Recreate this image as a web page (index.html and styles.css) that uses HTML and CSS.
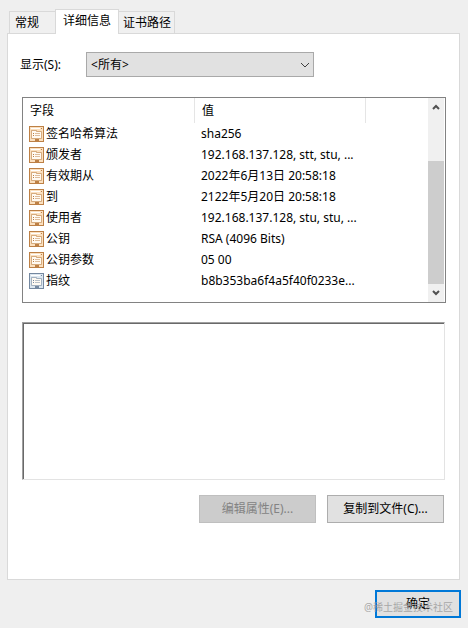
FILE: index.html
```html
<!DOCTYPE html>
<html lang="zh-CN">
<head>
  <meta charset="UTF-8" />
  <meta name="viewport" content="width=device-width, initial-scale=1.0" />
  <title>证书</title>
  <link rel="stylesheet" href="styles.css">
</head>
<body>
  <!-- 图标定义 -->
  <svg class="defs" aria-hidden="true">
    <symbol id="field" viewBox="0 0 15 16">
      <rect class="frame" x="0.5" y="0.5" width="14" height="15" />
      <path class="light" d="M2 2.5h9" />
      <path class="dark" d="M12 2.5h1" />
      <path class="paper" d="M2.5 4.5h5v1h5v7h-10z" />
      <path class="dark" d="M4 7.5h1M4 9.5h1" />
      <path class="line" d="M6 7.5h5M6 9.5h5" />
      <path class="seal" d="M6 14h4" />
    </symbol>
    <symbol id="chevron" viewBox="0 0 10 6">
      <path d="M1 1l4 4 4-4" fill="none" stroke="currentColor" />
    </symbol>
    <symbol id="arrow" viewBox="0 0 8 6">
      <path d="M1 1l3 3 3-3" fill="none" stroke="currentColor" stroke-width="2" />
    </symbol>
  </svg>

  <nav class="tabs" role="tablist">
    <button class="tab" role="tab" aria-selected="false">常规</button>
    <button class="tab active" role="tab" aria-selected="true">详细信息</button>
    <button class="tab" role="tab" aria-selected="false">证书路径</button>
  </nav>

  <main class="panel">
    <div class="filter">
      <label for="show">显示(S):</label>
      <div class="select">
        <select id="show">
          <option>&lt;所有&gt;</option>
        </select>
        <svg class="chevron"><use href="#chevron" /></svg>
      </div>
    </div>

    <!-- 字段列表 -->
    <div class="list">
      <table class="fields">
        <thead>
          <tr><th class="col-name">字段</th><th class="col-value">值</th><th></th></tr>
        </thead>
        <tbody>
          <tr><td><span class="name"><svg class="icon"><use href="#field" /></svg>签名哈希算法</span></td><td>sha256</td><td></td></tr>
          <tr><td><span class="name"><svg class="icon"><use href="#field" /></svg>颁发者</span></td><td>192.168.137.128, stt, stu, ...</td><td></td></tr>
          <tr><td><span class="name"><svg class="icon"><use href="#field" /></svg>有效期从</span></td><td>2022年6月13日 20:58:18</td><td></td></tr>
          <tr><td><span class="name"><svg class="icon"><use href="#field" /></svg>到</span></td><td>2122年5月20日 20:58:18</td><td></td></tr>
          <tr><td><span class="name"><svg class="icon"><use href="#field" /></svg>使用者</span></td><td>192.168.137.128, stu, stu, ...</td><td></td></tr>
          <tr><td><span class="name"><svg class="icon"><use href="#field" /></svg>公钥</span></td><td>RSA (4096 Bits)</td><td></td></tr>
          <tr><td><span class="name"><svg class="icon"><use href="#field" /></svg>公钥参数</span></td><td>05 00</td><td></td></tr>
          <tr><td><span class="name"><svg class="icon blue"><use href="#field" /></svg>指纹</span></td><td>b8b353ba6f4a5f40f0233e...</td><td></td></tr>
        </tbody>
      </table>
      <div class="scrollbar">
        <button class="scroll-btn" aria-label="向上滚动"><svg class="arrow up"><use href="#arrow" /></svg></button>
        <div class="track"><div class="thumb"></div></div>
        <button class="scroll-btn" aria-label="向下滚动"><svg class="arrow"><use href="#arrow" /></svg></button>
      </div>
    </div>

    <textarea class="detail" aria-label="字段内容" readonly></textarea>

    <div class="actions">
      <button class="btn" disabled>编辑属性(E)...</button>
      <button class="btn">复制到文件(C)...</button>
    </div>
  </main>

  <footer class="footer">
    <button class="btn ok">确定</button>
    <span class="watermark">@稀土掘金技术社区</span>
  </footer>
</body>
</html>
```
FILE: styles.css
```css
* {
  box-sizing: border-box;
}

body {
  display: flex;
  flex-direction: column;
  min-height: 100vh;
  margin: 0;
  padding: 9px 7px 10px;
  background-color: #efefef;
  color: #000;
}

body, button, select, textarea {
  font-family: "Noto Sans", "Noto Sans CJK SC", sans-serif;
  font-size: 12px;
  line-height: 18px;
}

.defs {
  position: absolute;
  width: 0;
  height: 0;
}

/* 选项卡 */
.tabs {
  display: flex;
  align-items: flex-end;
  padding-left: 2px;
}

.tab {
  height: 22px;
  padding: 0 4px;
  border: 1px solid #d9d9d9;
  border-bottom: none;
  background-color: #f0f0f0;
  color: #000;
  white-space: nowrap;
}

.tab:first-child {
  padding: 0 16px 0 5px;
  border-right: none;
}

.tab:last-child {
  padding-right: 3px;
  border-left: none;
}

.tab.active {
  height: 25px;
  margin-bottom: -1px;
  padding: 0 7px 2px;
  background-color: #fff;
  z-index: 1;
}

.panel {
  flex: 1;
  display: flex;
  flex-direction: column;
  margin-right: 1px;
  padding: 18px 13px 18px 14px;
  border: 1px solid #d9d9d9;
  background-color: #fff;
}

.filter {
  display: flex;
  align-items: center;
  gap: 25px;
  margin-left: -2px;
}

.select {
  position: relative;
  width: 228px;
}

.select select {
  width: 100%;
  height: 25px;
  padding: 0 20px 0 4px;
  border: 1px solid #a9a9a9;
  border-radius: 0;
  background-color: #e1e1e1;
  color: #000;
  appearance: none;
}

.chevron {
  position: absolute;
  top: 10px;
  right: 4px;
  width: 10px;
  height: 6px;
  color: #404040;
  pointer-events: none;
}

/* 字段列表 */
.list {
  display: flex;
  height: 206px;
  margin-top: 20px;
  padding-right: 1px;
  border: 1px solid #828282;
}

.fields {
  flex: 1;
  align-self: flex-start;
  table-layout: fixed;
  border-collapse: separate;
  border-spacing: 0;
}

.fields th {
  height: 25px;
  padding: 0 7px;
  border-right: 1px solid #e5e5e5;
  font-weight: normal;
  text-align: left;
}

.fields th:last-child {
  border-right: none;
}

.col-name {
  width: 172px;
}

.col-value {
  width: 171px;
}

.fields td {
  height: 21px;
  padding: 0 6px;
  white-space: nowrap;
}

.name {
  display: flex;
  align-items: center;
  gap: 2px;
}

.icon {
  width: 15px;
  height: 16px;
  color: #bd8045;
  fill: #fbe0bf;
}

.icon.blue {
  color: #7488a0;
  fill: #dce7f0;
}

.frame {
  stroke: currentColor;
}

.paper {
  fill: #fffaf2;
  stroke: currentColor;
  stroke-opacity: 0.6;
}

.light {
  stroke: #fff;
}

.line {
  stroke: currentColor;
  stroke-opacity: 0.5;
}

.dark {
  stroke: currentColor;
}

.seal {
  stroke: currentColor;
  stroke-width: 2;
}

.scrollbar {
  display: flex;
  flex-direction: column;
  width: 16px;
  background-color: #f0f0f0;
}

.scroll-btn {
  display: flex;
  align-items: center;
  justify-content: center;
  height: 18px;
  padding: 0;
  border: none;
  background-color: #f0f0f0;
}

.arrow {
  width: 8px;
  height: 6px;
  color: #505050;
}

.arrow.up {
  transform: rotate(180deg);
}

.track {
  flex: 1;
  display: flex;
  align-items: flex-end;
}

.thumb {
  width: 100%;
  height: 73%;
  background-color: #cdcdcd;
}

.detail {
  height: 158px;
  margin: 19px 1px 0 0;
  border: 1px solid;
  border-color: #a0a0a0 #e3e3e3 #e3e3e3 #a0a0a0;
  background-color: #fff;
  box-shadow: inset 1px 1px #696969;
  resize: none;
  outline: none;
}

/* 按钮 */
.actions {
  display: flex;
  justify-content: flex-end;
  gap: 11px;
  margin: 15px 2px 0 0;
}

.btn {
  width: 117px;
  height: 28px;
  padding: 0;
  border: 1px solid #adadad;
  background-color: #e1e1e1;
  color: #000;
}

.btn:disabled {
  border-color: #bfbfbf;
  background-color: #cccccc;
  color: #838383;
}

.footer {
  position: relative;
  display: flex;
  justify-content: flex-end;
  margin-top: 10px;
}

.btn.ok {
  width: 86px;
  border: 2px solid #0078d7;
}

.watermark {
  position: absolute;
  right: 8px;
  bottom: 2px;
  font-size: 10px;
  color: #999;
  opacity: 0.8;
  pointer-events: none;
}
```
